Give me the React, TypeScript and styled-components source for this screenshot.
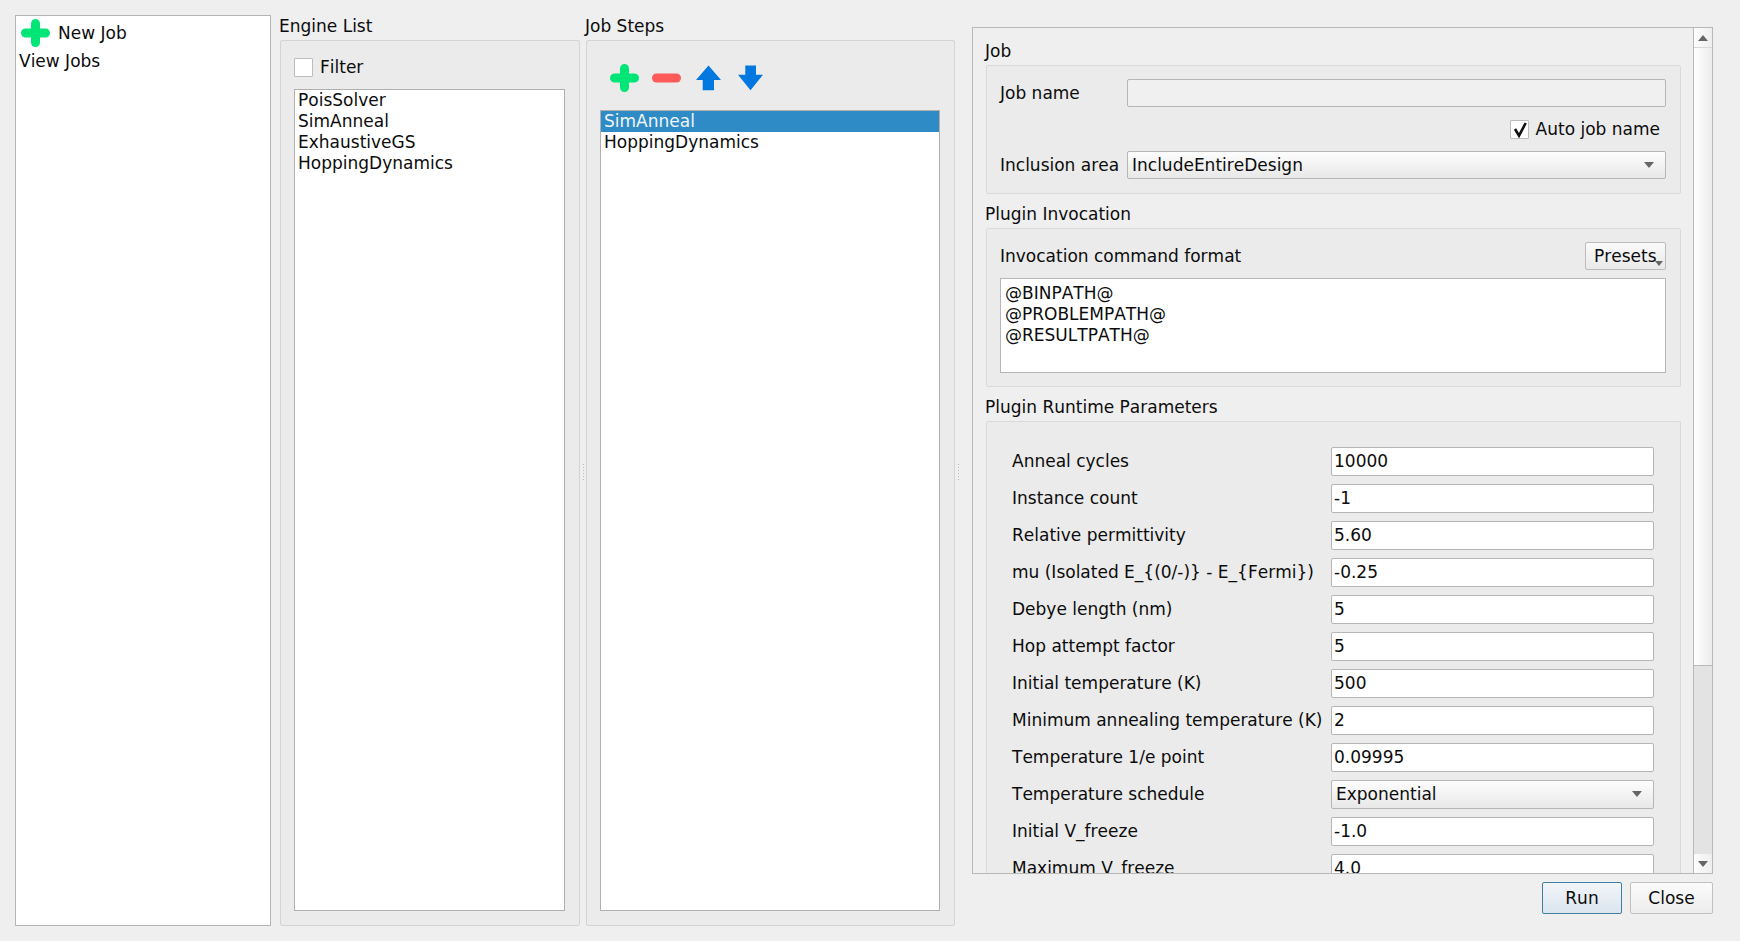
import React from "react";
import styled, { createGlobalStyle } from "styled-components";

const Global = createGlobalStyle`
  html, body { margin: 0; padding: 0; background: #efefef; }
  * { box-sizing: border-box; }
  body { font-family: "DejaVu Sans", sans-serif; font-size: 17px; font-kerning: none; color: #0c0c0c; overflow: hidden; }
`;

const Page = styled.div`
  width: 1740px; height: 941px; display: flex; align-items: flex-start; padding: 15px 27px 0 15px; background: #efefef;
`;
const Sidebar = styled.div`
  width: 256px; height: 911px; flex: none; background: #fff; border: 1px solid #b4b4b4; padding: 3px; line-height: 28px;
`;
const SideRow = styled.div`
  display: flex; align-items: center; height: 28px; gap: 8px; padding-left: ${p => (p.$icon ? "2px" : "0")};
`;
const Column = styled.div`
  flex: none; display: flex; flex-direction: column; width: ${p => p.$w}px; height: 911px; margin-left: ${p => p.$ml}px;
`;
const ColumnTitle = styled.div`
  height: 25px; line-height: 22px; flex: none; margin-left: -1px;
`;
const Group = styled.div`
  flex: 1; min-height: 0; background: #ebebeb; border: 1px solid #d4d4d4; border-radius: 2px; display: flex; flex-direction: column; padding: 0 14px 14px 13px;
`;
const FilterRow = styled.label`
  display: flex; align-items: center; height: 48px; padding-top: 5px; flex: none; gap: 7px;
`;
const Check = styled.span`
  width: 19px; height: 19px; flex: none; background: #fff; border: 1px solid #bcbcbc; border-radius: 1px; display: inline-flex; align-items: center; justify-content: center;
`;
const CheckLabel = styled.span`
  margin-bottom: 2px;
`;
const ListBox = styled.div`
  flex: 1; min-height: 0; background: #fff; border: 1px solid #b0b0b0; padding: 0; line-height: 21px;
`;
const ListItem = styled.div`
  height: 21px; padding-left: 3px; white-space: nowrap;
  background: ${p => (p.$sel ? "#2e8bc6" : "transparent")};
  color: ${p => (p.$sel ? "#f0f4f8" : "inherit")};
`;
const StepToolbar = styled.div`
  display: flex; align-items: center; height: 69px; flex: none; padding: 5px 0 0 10px;
`;
const ToolIcon = styled.span`
  display: inline-flex; flex: none; margin-left: ${p => p.$ml || 0}px;
`;
const Handle = styled.div`
  width: 2px; flex: none; height: 18px; margin: 449px ${p => p.$m || 0}px 0;
  background-image: linear-gradient(#bbbbbb 34%, transparent 34%); background-size: 1px 3px; background-repeat: repeat-y; background-position: right top;
`;
const RightColumn = styled.div`
  flex: 1; display: flex; flex-direction: column; margin-top: 12px; margin-left: 11px; height: 899px; min-width: 0;
`;
const ScrollFrame = styled.div`
  height: 847px; flex: none; border: 1px solid #b8b8b8; display: flex; overflow: hidden; background: #efefef;
`;
const ScrollContent = styled.div`
  flex: 1; min-width: 0; overflow: hidden; padding: 12px 12px 0 13px;
`;
const SectionTitle = styled.div`
  height: 25px; line-height: 22px; margin-left: -1px;
`;
const Section = styled.div`
  background: #ebebeb; border: 1px solid #dadada; border-radius: 2px; margin-bottom: 9px; padding: ${p => p.$pad || "13px 14px 13px 13px"};
`;
const FormRow = styled.div`
  display: flex; align-items: center; gap: ${p => p.$gap || 8}px; height: ${p => p.$h || 28}px; justify-content: ${p => (p.$end ? "flex-end" : "flex-start")};
  margin-top: ${p => p.$mt || 0}px; padding-right: ${p => p.$pr || 0}px;
`;
const JobLabel = styled.div`
  width: 119px; flex: none; white-space: nowrap;
`;
const TextInput = styled.div`
  flex: 1; height: 28px; line-height: 26px; background: ${p => (p.$disabled ? "#f0f0f0" : "#fff")}; border: 1px solid #b6b6b6; border-radius: 2px; padding-left: 2px; white-space: nowrap; min-width: 0;
`;
const Combo = styled.div`
  flex: 1; height: 28px; display: flex; align-items: center; justify-content: space-between; background: linear-gradient(#fdfdfd, #e8e8e8);
  border: 1px solid #b6b6b6; border-radius: 2px; padding: 0 11px 0 4px; min-width: 0;
`;
const ComboArrow = styled.span`
  width: 0; height: 0; border-left: 5px solid transparent; border-right: 5px solid transparent; border-top: 6px solid #666; flex: none;
`;
const PresetsButton = styled.div`
  width: 81px; height: 28px; position: relative; background: linear-gradient(#fafafa, #e9e9e9); border: 1px solid #bcbcbc; border-radius: 2px; line-height: 26px; padding-left: 8px; white-space: nowrap; overflow: hidden;
`;
const PresetsArrow = styled.span`
  position: absolute; right: 2px; bottom: 3px; width: 0; height: 0; border-left: 4px solid transparent; border-right: 4px solid transparent; border-top: 5px solid #666;
`;
const SpaceBetween = styled.div`
  display: flex; align-items: center; justify-content: space-between; height: 28px;
`;
const TextArea = styled.div`
  margin-top: 8px; height: 95px; background: #fff; border: 1px solid #b6b6b6; padding: 4px; line-height: 21px; white-space: pre-line;
`;
const ParamGrid = styled.div`
  display: grid; grid-template-columns: 319px 323px; row-gap: 8px; align-items: center; padding: 25px 0 0 25px;
`;
const ParamLabel = styled.div`
  white-space: nowrap; height: 29px; line-height: 29px;
`;
const ParamInput = styled.div`
  height: 29px; line-height: 27px; background: #fff; border: 1px solid #b6b6b6; border-radius: 2px; padding-left: 2px; white-space: nowrap;
`;
const ParamCombo = styled(Combo)`
  height: 29px; flex: none; padding-bottom: 1px;
`;
const ScrollBar = styled.div`
  width: 19px; flex: none; display: flex; flex-direction: column; background: #e3e3e3; border-left: 1px solid #b8b8b8;
`;
const ScrollBtn = styled.div`
  height: 19px; flex: none; display: flex; align-items: center; justify-content: center; background: linear-gradient(90deg, #fdfdfd, #eeeeee);
`;
const ScrollThumb = styled.div`
  height: 619px; flex: none; background: linear-gradient(90deg, #ffffff, #ececec); border-top: 1px solid #d8d8d8; border-bottom: 1px solid #b8b8b8;
`;
const ScrollTrack = styled.div`
  flex: 1;
`;
const ArrowUp = styled.span`
  width: 0; height: 0; border-left: 5px solid transparent; border-right: 5px solid transparent; border-bottom: 6px solid #666;
`;
const ArrowDown = styled.span`
  width: 0; height: 0; border-left: 5px solid transparent; border-right: 5px solid transparent; border-top: 6px solid #666;
`;
const ButtonRow = styled.div`
  display: flex; justify-content: flex-end; gap: 8px; margin-top: 8px;
`;
const PushButton = styled.div`
  width: ${p => p.$w}px; height: 32px; display: flex; align-items: center; justify-content: center; border-radius: 2px;
  border: 1px solid ${p => (p.$primary ? "#3e7fa6" : "#c0c0c0")};
  background: ${p => (p.$primary ? "linear-gradient(#f2f5f8, #dbe5ee)" : "linear-gradient(#fbfbfb, #ededed)")};
`;

const Plus = () => (
  <svg width="29" height="28" viewBox="0 0 29 28" style={{ flex: "none" }}>
    <path d="M14.5 4.5V23.5M4.5 14H24.5" stroke="#00e676" strokeWidth="9" strokeLinecap="round" fill="none" />
  </svg>
);
const Minus = () => (
  <svg width="29" height="28" viewBox="0 0 29 28" style={{ flex: "none" }}>
    <path d="M4.5 14H24.5" stroke="#ff5a5a" strokeWidth="9" strokeLinecap="round" fill="none" />
  </svg>
);
const Up = () => (
  <svg width="26" height="26" viewBox="0 0 26 26" style={{ flex: "none" }}>
    <path d="M12.5 0.5L25 15H18V25.2H6.7V15H0Z" fill="#0078e0" />
  </svg>
);
const Down = () => (
  <svg width="26" height="26" viewBox="0 0 26 26" style={{ flex: "none" }}>
    <path d="M12.5 25.2L25 9.8H18V0.5H7.3V9.8H0Z" fill="#0078e0" />
  </svg>
);
const Tick = () => (
  <svg width="17" height="17" viewBox="0 0 17 17">
    <path d="M4 8L8 14.7L14.7 2" stroke="#111" strokeWidth="2.6" fill="none" />
  </svg>
);

const params: [string, string][] = [
  ["Anneal cycles", "10000"],
  ["Instance count", "-1"],
  ["Relative permittivity", "5.60"],
  ["mu (Isolated E_{(0/-)} - E_{Fermi})", "-0.25"],
  ["Debye length (nm)", "5"],
  ["Hop attempt factor", "5"],
  ["Initial temperature (K)", "500"],
  ["Minimum annealing temperature (K)", "2"],
  ["Temperature 1/e point", "0.09995"],
  ["Temperature schedule", "@Exponential"],
  ["Initial V_freeze", "-1.0"],
  ["Maximum V_freeze", "4.0"],
];

export default function App() {
  return (
    <Page>
      <Global />
      <Sidebar>
        <SideRow $icon><Plus /><span>New Job</span></SideRow>
        <SideRow>View Jobs</SideRow>
      </Sidebar>
      <Column $w={300} $ml={9}>
        <ColumnTitle>Engine List</ColumnTitle>
        <Group>
          <FilterRow><Check /><CheckLabel>Filter</CheckLabel></FilterRow>
          <ListBox>
            <ListItem>PoisSolver</ListItem>
            <ListItem>SimAnneal</ListItem>
            <ListItem>ExhaustiveGS</ListItem>
            <ListItem>HoppingDynamics</ListItem>
          </ListBox>
        </Group>
      </Column>
      <Handle $m={2} />
      <Column $w={369} $ml={0}>
        <ColumnTitle>Job Steps</ColumnTitle>
        <Group>
          <StepToolbar>
            <ToolIcon><Plus /></ToolIcon>
            <ToolIcon $ml={13}><Minus /></ToolIcon>
            <ToolIcon $ml={15}><Up /></ToolIcon>
            <ToolIcon $ml={16}><Down /></ToolIcon>
          </StepToolbar>
          <ListBox>
            <ListItem $sel>SimAnneal</ListItem>
            <ListItem>HoppingDynamics</ListItem>
          </ListBox>
        </Group>
      </Column>
      <Handle $m={2} />
      <RightColumn>
        <ScrollFrame>
          <ScrollContent>
            <SectionTitle>Job</SectionTitle>
            <Section $pad="13px 14px 14px 13px">
              <FormRow><JobLabel>Job name</JobLabel><TextInput $disabled /></FormRow>
              <FormRow $h={21} $mt={12} $end $pr={6} $gap={7}><Check><Tick /></Check><CheckLabel>Auto job name</CheckLabel></FormRow>
              <FormRow $mt={11}><JobLabel>Inclusion area</JobLabel><Combo><span>IncludeEntireDesign</span><ComboArrow /></Combo></FormRow>
            </Section>
            <SectionTitle>Plugin Invocation</SectionTitle>
            <Section>
              <SpaceBetween><span>Invocation command format</span><PresetsButton>Presets<PresetsArrow /></PresetsButton></SpaceBetween>
              <TextArea>{"@BINPATH@\n@PROBLEMPATH@\n@RESULTPATH@"}</TextArea>
            </Section>
            <SectionTitle>Plugin Runtime Parameters</SectionTitle>
            <Section $pad="0 0 60px 0">
              <ParamGrid>
                {params.map(([l, v]) => (
                  <React.Fragment key={l}>
                    <ParamLabel>{l}</ParamLabel>
                    {v.startsWith("@")
                      ? <ParamCombo><span>{v.slice(1)}</span><ComboArrow /></ParamCombo>
                      : <ParamInput>{v}</ParamInput>}
                  </React.Fragment>
                ))}
              </ParamGrid>
            </Section>
          </ScrollContent>
          <ScrollBar>
            <ScrollBtn><ArrowUp /></ScrollBtn>
            <ScrollThumb />
            <ScrollTrack />
            <ScrollBtn><ArrowDown /></ScrollBtn>
          </ScrollBar>
        </ScrollFrame>
        <ButtonRow>
          <PushButton $w={80} $primary>Run</PushButton>
          <PushButton $w={83}>Close</PushButton>
        </ButtonRow>
      </RightColumn>
    </Page>
  );
}
